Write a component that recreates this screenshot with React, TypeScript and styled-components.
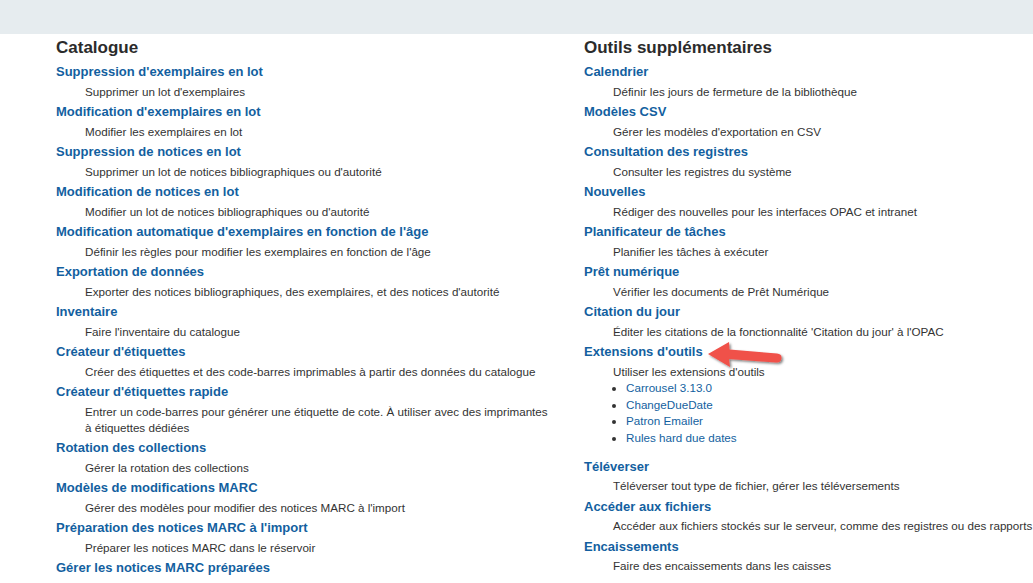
import React from 'react';
import styled, { createGlobalStyle } from 'styled-components';

interface Tool {
  title: string;
  desc: string;
  plugins?: string[];
  marked?: boolean;
}

const catalogue: Tool[] = [
  { title: "Suppression d'exemplaires en lot", desc: "Supprimer un lot d'exemplaires" },
  { title: "Modification d'exemplaires en lot", desc: 'Modifier les exemplaires en lot' },
  { title: 'Suppression de notices en lot', desc: "Supprimer un lot de notices bibliographiques ou d'autorité" },
  { title: 'Modification de notices en lot', desc: "Modifier un lot de notices bibliographiques ou d'autorité" },
  {
    title: "Modification automatique d'exemplaires en fonction de l'âge",
    desc: "Définir les règles pour modifier les exemplaires en fonction de l'âge",
  },
  {
    title: 'Exportation de données',
    desc: "Exporter des notices bibliographiques, des exemplaires, et des notices d'autorité",
  },
  { title: 'Inventaire', desc: "Faire l'inventaire du catalogue" },
  {
    title: "Créateur d'étiquettes",
    desc: 'Créer des étiquettes et des code-barres imprimables à partir des données du catalogue',
  },
  {
    title: "Créateur d'étiquettes rapide",
    desc: 'Entrer un code-barres pour générer une étiquette de cote. À utiliser avec des imprimantes à étiquettes dédiées',
  },
  { title: 'Rotation des collections', desc: 'Gérer la rotation des collections' },
  { title: 'Modèles de modifications MARC', desc: "Gérer des modèles pour modifier des notices MARC à l'import" },
  { title: "Préparation des notices MARC à l'import", desc: 'Préparer les notices MARC dans le réservoir' },
  {
    title: 'Gérer les notices MARC préparées',
    desc: "Gérer les notices MARC préparées, y compris la finalisation et l'annulation des imports",
  },
];

const outils: Tool[] = [
  { title: 'Calendrier', desc: 'Définir les jours de fermeture de la bibliothèque' },
  { title: 'Modèles CSV', desc: "Gérer les modèles d'exportation en CSV" },
  { title: 'Consultation des registres', desc: 'Consulter les registres du système' },
  { title: 'Nouvelles', desc: 'Rédiger des nouvelles pour les interfaces OPAC et intranet' },
  { title: 'Planificateur de tâches', desc: 'Planifier les tâches à exécuter' },
  { title: 'Prêt numérique', desc: 'Vérifier les documents de Prêt Numérique' },
  { title: 'Citation du jour', desc: "Éditer les citations de la fonctionnalité 'Citation du jour' à l'OPAC" },
  {
    title: "Extensions d'outils",
    desc: "Utiliser les extensions d'outils",
    plugins: ['Carrousel 3.13.0', 'ChangeDueDate', 'Patron Emailer', 'Rules hard due dates'],
    marked: true,
  },
  { title: 'Téléverser', desc: 'Téléverser tout type de fichier, gérer les téléversements' },
  {
    title: 'Accéder aux fichiers',
    desc: 'Accéder aux fichiers stockés sur le serveur, comme des registres ou des rapports',
  },
  { title: 'Encaissements', desc: 'Faire des encaissements dans les caisses' },
];

const GlobalStyle = createGlobalStyle`
  html, body {
    margin: 0;
    padding: 0;
    overflow: hidden;
    background: #ffffff;
  }
  body {
    font-family: "Liberation Sans", Arial, sans-serif;
    color: #333333;
  }
`;

const Page = styled.div`
  width: 100%;
`;

const TopBar = styled.div`
  height: 34px;
  background: #e6ecef;
`;

const Columns = styled.div`
  display: grid;
  grid-template-columns: 528px 528px;
  padding-left: 56px;
`;

const Column = styled.div`
  padding-right: 30px;
`;

const Heading = styled.h3`
  margin: 4px 0 2px;
  font-size: 17px;
  line-height: 20px;
  font-weight: bold;
  color: #2b2b2b;
`;

const Item = styled.div<{ $extraGap?: boolean }>`
  position: relative;
  padding-bottom: ${(p) => (p.$extraGap ? '8px' : '0')};
`;

const ItemLink = styled.a`
  display: block;
  padding-top: 3px;
  font-size: 13px;
  line-height: 17px;
  font-weight: bold;
  color: #135fa0;
  text-decoration: none;
`;

const ItemDesc = styled.div`
  padding: 3.5px 0 0.5px 29px;
  font-size: 11.65px;
  line-height: 16px;
  color: #333333;
`;

const PluginList = styled.ul`
  margin: 0;
  padding-left: 42px;
  font-size: 11.65px;
  line-height: 16.7px;
`;

const PluginItem = styled.li`
  color: #333333;
  a {
    color: #135fa0;
    text-decoration: none;
  }
`;

const Arrow = styled.svg`
  position: absolute;
  left: 120px;
  top: -1px;
  width: 82px;
  height: 34px;
  pointer-events: none;
`;

const PointerArrow = () => (
  <Arrow viewBox="0 0 82 34">
    <defs>
      <filter id="arrowShadow" x="-20%" y="-40%" width="140%" height="180%">
        <feDropShadow dx="1.5" dy="1.5" stdDeviation="1.3" floodColor="#000" floodOpacity="0.5" />
      </filter>
    </defs>
    <g filter="url(#arrowShadow)">
      <path
        d="M4 15 L25 3 L25.5 10.5 L73 14.5 Q78 15 77.5 19.5 Q77 24 72 23.5 L25 20 L26 28 Z"
        fill="#f0514a"
        strokeLinejoin="round"
      />
    </g>
  </Arrow>
);

const ToolEntry = ({ tool }: { tool: Tool }) => (
  <Item $extraGap={!!tool.plugins}>
    <ItemLink href="#">{tool.title}</ItemLink>
    {tool.marked && <PointerArrow />}
    <ItemDesc>{tool.desc}</ItemDesc>
    {tool.plugins && (
      <PluginList>
        {tool.plugins.map((p) => (
          <PluginItem key={p}>
            <a href="#">{p}</a>
          </PluginItem>
        ))}
      </PluginList>
    )}
  </Item>
);

export default function App() {
  return (
    <Page>
      <GlobalStyle />
      <TopBar />
      <Columns>
        <Column>
          <Heading>Catalogue</Heading>
          {catalogue.map((t) => (
            <ToolEntry key={t.title} tool={t} />
          ))}
        </Column>
        <Column>
          <Heading>Outils supplémentaires</Heading>
          {outils.map((t) => (
            <ToolEntry key={t.title} tool={t} />
          ))}
        </Column>
      </Columns>
    </Page>
  );
}
